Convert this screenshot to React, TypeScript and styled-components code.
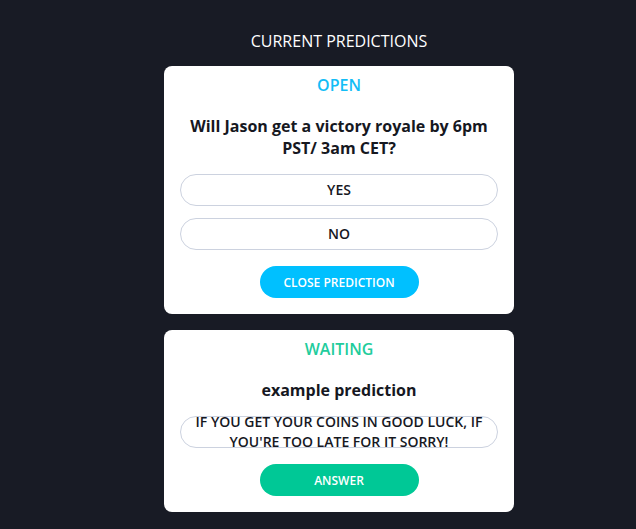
import React from 'react';
import styled, {createGlobalStyle} from "styled-components";

const GlobalStyle = createGlobalStyle`
  html, body {
    margin: 0;
    padding: 0;
    background: #181b25;
    font-family: "Open Sans", "Liberation Sans", sans-serif;
  }
`

type Prediction = {
    status: 'open' | 'waiting'
    question: string
    options?: string[]
    message?: string
}

const predictions: Prediction[] = [
    {
        status: 'open',
        question: 'Will Jason get a victory royale by 6pm PST/ 3am CET?',
        options: ['YES', 'NO'],
    },
    {
        status: 'waiting',
        question: 'example prediction',
        message: "IF YOU GET YOUR COINS IN GOOD LUCK, IF YOU'RE TOO LATE FOR IT SORRY!",
    },
]

const colors = {
    open: '#12bdf6',
    waiting: '#22cc9c',
}

const buttonColors = {
    open: '#00c0ff',
    waiting: '#00c896',
}

const App = () => {
    return (
        <Page>
            <GlobalStyle/>
            <Column>
                <Title>CURRENT PREDICTIONS</Title>
                {predictions.map((p, index) => (
                    <Card key={index}>
                        <Status status={p.status}>{p.status.toUpperCase()}</Status>
                        <Question>{p.question}</Question>
                        {p.options && (
                            <Options>
                                {p.options.map(o => <Option key={o}>{o}</Option>)}
                            </Options>
                        )}
                        {p.message && <Option>{p.message}</Option>}
                        <Action status={p.status}>
                            {p.status === 'open' ? 'CLOSE PREDICTION' : 'ANSWER'}
                        </Action>
                    </Card>
                ))}
            </Column>
        </Page>
    );
};

export default App;

const Page = styled.div`
  min-height: 529px;
  padding-left: 42px;
  display: flex;
  justify-content: center;
`

const Column = styled.div`
  width: 350px;
  padding-top: 30px;
  display: flex;
  flex-direction: column;
  align-items: center;
`

const Title = styled.h2`
  margin: 0 0 14px;
  font-size: 16px;
  font-weight: 400;
  line-height: 22px;
  color: #ffffff;
`

const Card = styled.div`
  width: 100%;
  box-sizing: border-box;
  background: #ffffff;
  border-radius: 8px;
  padding: 9px 16px 16px;
  margin-bottom: 16px;
  display: flex;
  flex-direction: column;
  align-items: center;
`

const Status = styled.div<{ status: 'open' | 'waiting' }>`
  font-size: 16px;
  font-weight: 600;
  line-height: 20px;
  color: ${props => colors[props.status]};
`

const Question = styled.div`
  margin: 20px 0 15px;
  font-size: 16px;
  font-weight: 700;
  line-height: 22px;
  color: #16181f;
  text-align: center;
  padding: 0 10px;
`

const Options = styled.div`
  width: 100%;
  display: flex;
  flex-direction: column;
  gap: 12px;
`

const Option = styled.div`
  width: 100%;
  box-sizing: border-box;
  height: 32px;
  border: 1px solid #ccd2df;
  border-radius: 16px;
  display: flex;
  align-items: center;
  justify-content: center;
  text-align: center;
  font-size: 14px;
  font-weight: 600;
  line-height: 20px;
  color: #16181f;
  padding: 0 10px;
`

const Action = styled.button<{ status: 'open' | 'waiting' }>`
  margin-top: 16px;
  width: 159px;
  height: 32px;
  border: none;
  border-radius: 16px;
  background: ${props => buttonColors[props.status]};
  color: #ffffff;
  font-family: "Open Sans", "Liberation Sans", sans-serif;
  font-size: 12px;
  font-weight: 600;
  cursor: pointer;
`
